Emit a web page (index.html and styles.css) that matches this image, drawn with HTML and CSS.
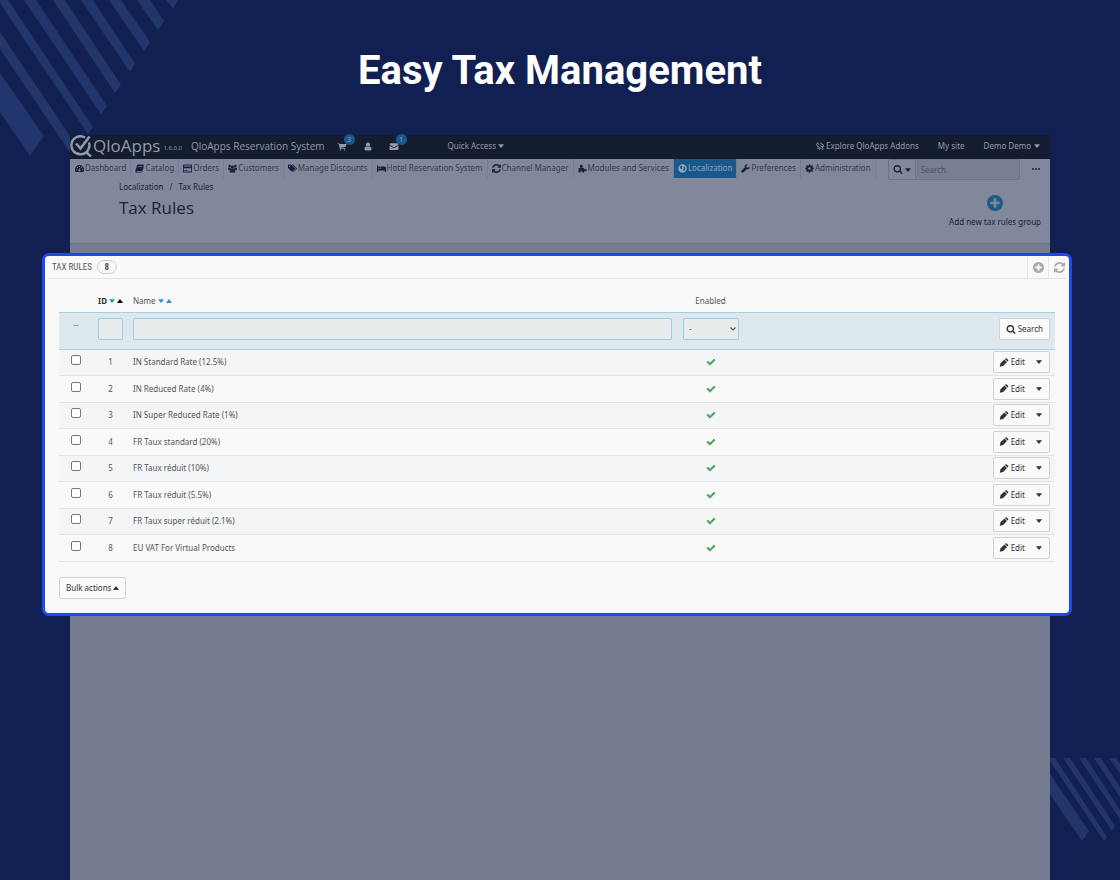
FILE: index.html
```html
<!DOCTYPE html>
<html lang="en">
<head>
    <meta charset="UTF-8">
    <meta name="viewport" content="width=device-width, initial-scale=1.0">
    <title>Easy Tax Management</title>
    <link rel="stylesheet" href="styles.css">
</head>
<body>
    <!-- Icon sprite -->
    <svg class="sprite" aria-hidden="true">
        <symbol id="i-check" viewBox="0 0 1792 1792"><path d="M1671 566q0 40-28 68l-724 724-136 136q-28 28-68 28t-68-28l-136-136-362-362q-28-28-28-68t28-68l136-136q28-28 68-28t68 28l294 295 656-657q28-28 68-28t68 28l136 136q28 28 28 68z"/></symbol>
        <symbol id="i-plus" viewBox="128 128 1536 1536"><path d="M1344 960v-128q0-26-19-45t-45-19h-256v-256q0-26-19-45t-45-19h-128q-26 0-45 19t-19 45v256h-256q-26 0-45 19t-19 45v128q0 26 19 45t45 19h256v256q0 26 19 45t45 19h128q26 0 45-19t19-45v-256h256q26 0 45-19t19-45zm320-64q0 209-103 385.5t-279.5 279.5-385.5 103-385.5-103-279.5-279.5-103-385.5 103-385.5 279.5-279.5 385.5-103 385.5 103 279.5 279.5 103 385.5z"/></symbol>
        <symbol id="i-search" viewBox="64 128 1664 1664"><path d="M1216 832q0-185-131.5-316.5t-316.5-131.5-316.5 131.5-131.5 316.5 131.5 316.5 316.5 131.5 316.5-131.5 131.5-316.5zm512 832q0 52-38 90t-90 38q-54 0-90-38l-343-342q-179 124-399 124-143 0-273.5-55.5t-225-150-150-225-55.5-273.5 55.5-273.5 150-225 225-150 273.5-55.5 273.5 55.5 225 150 150 225 55.5 273.5q0 220-124 399l343 343q37 37 37 90z"/></symbol>
        <symbol id="i-refresh" viewBox="128 128 1536 1536"><path d="M1639 1056q0 5-1 7-64 268-268 434.5t-478 166.5q-146 0-282.5-55t-243.5-157l-129 129q-19 19-45 19t-45-19-19-45v-448q0-26 19-45t45-19h448q26 0 45 19t19 45-19 45l-137 137q71 66 161 102t187 36q134 0 250-65t186-179q11-17 53-117 8-23 30-23h192q13 0 22.5 9.5t9.500 22.500zm25-800v448q0 26-19 45t-45 19h-448q-26 0-45-19t-19-45 19-45l138-138q-148-137-349-137-134 0-250 65t-186 179q-11 17-53 117-8 23-30 23h-199q-13 0-22.500-9.500t-9.500-22.500v-7q65-268 270-434.500t480-166.500q146 0 284 55.500t245 156.500l130-129q19-19 45-19t45 19 19 45z"/></symbol>
        <symbol id="i-pencil" viewBox="0 0 16 16"><path d="M.5 15.500L1.700 9.500 8.700 2.700l4.600 4.600-6.800 7zM9.600 1.800l1-1q1.200-1 2.300 0L15.200 3.100q1 1.200 0 2.300l-1 1z"/></symbol>
        <symbol id="i-dashboard" viewBox="0 0 16 16"><path fill-rule="evenodd" d="M8 2a8 8 0 0 1 7 12H1A8 8 0 0 1 8 2zM8 3.500a1 1 0 1 0 0 2 1 1 0 0 0 0-2zM4.200 5a1 1 0 1 0 0 2 1 1 0 0 0 0-2zM11.800 5a1 1 0 1 0 0 2 1 1 0 0 0 0-2zM2.700 9a1 1 0 1 0 0 2 1 1 0 0 0 0-2zM13.300 9a1 1 0 1 0 0 2 1 1 0 0 0 0-2zM8.600 6.500L7.400 9.500a1.800 1.800 0 1 0 1.500.3l.7-3z"/></symbol>
        <symbol id="i-book" viewBox="0 0 16 16"><path fill-rule="evenodd" d="M5 1h9.500q1.300.3 1 1.500l-3 9.500q-.4 1-1.500 1H3q-.8.100-.6.800.3.700 1 .7h8.500l3-9.500.6.800-2.800 8.700q-.3 1-1.500 1H2.500Q.3 15 .5 12.500L3.500 2.500Q4 1 5 1zM6 4l-.4 1.200h6.500l.4-1.200z"/></symbol>
        <symbol id="i-card" viewBox="0 0 16 16"><path fill-rule="evenodd" d="M1.500 1h13Q16 1 16 2.500v11q0 1.500-1.500 1.500h-13Q0 15 0 13.500v-11Q0 1 1.500 1zM1.500 2.500v2h13v-2zM1.500 7.500v6h13v-6zM2.500 10.500h2v1.500h-2zM5.500 10.500h3v1.500h-3z"/></symbol>
        <symbol id="i-users" viewBox="0 0 16 16"><circle cx="3" cy="3.500" r="2.200"/><circle cx="13" cy="3.500" r="2.200"/><circle cx="8" cy="5.500" r="3"/><path d="M0 9.500Q0 6 1.500 6h3q0 2 1 3-1.500 0-2.500 1.500H1q-1 0-1-1zM16 9.500Q16 6 14.500 6h-3q0 2-1 3 1.500 0 2.500 1.500h2q1 0 1-1zM5.500 8.500h5q2.500 1 2.500 5 0 1.500-1.500 1.500h-7Q3 15 3 13.500q0-4 2.500-5z"/></symbol>
        <symbol id="i-tags" viewBox="0 0 16 16"><path fill-rule="evenodd" d="M0 2q0-1 1-1h4.500l1 .5 6 6q.7.700 0 1.500L8 13.500q-.8.700-1.500 0l-6-6L0 6.500zM3 2.700a1.200 1.200 0 1 0 0 2.400 1.200 1.200 0 0 0 0-2.400z"/><path d="M7 1h1.500l1 .5 6 6q.7.700 0 1.500L11 13.500q-.8.700-1.500 0l4-4q.8-1 .2-2z"/></symbol>
        <symbol id="i-bed" viewBox="0 0 16 16"><path d="M0 2h2v7h14v5h-2v-2.500H2V14H0z"/><circle cx="4.200" cy="6.500" r="2"/><path d="M6.500 4.500H13q3 0 3 3v1.500H6.500z"/></symbol>
        <symbol id="i-puzzle" viewBox="0 0 16 16"><path d="M1 7h3.500Q3 5 3.500 3.200 4.200 1.500 6 1.500t2.500 1.700Q9 5 7.500 7H11v3q1.500-1.200 2.800-1 1.700.3 1.700 2t-1.700 2q-1.300.2-2.800-1v3H7.500q.7-2.500-1.500-2.500T4.500 15H1z"/></symbol>
        <symbol id="i-globe" viewBox="0 0 16 16"><path fill-rule="evenodd" d="M8 .5a7.500 7.500 0 1 1 0 15 7.500 7.500 0 0 1 0-15zM5 3L3 5.500 4 8l2.500 1L8 7 6.500 5.500 8 3.500zM11 4L9.500 6l1 2L9 10l1 3 2.500-3 .5-3z"/></symbol>
        <symbol id="i-wrench" viewBox="0 0 16 16"><path d="M15.500 4.500q.5 3-2 4.500-1.700 1-3.500.3L4 15.200q-1 1-2.200 0l-1-1q-1-1.200 0-2.200L6.700 6Q6 4.200 7 2.500 8.500 0 12 .8L9.500 3.500l.5 2.500 2.500.5z"/></symbol>
        <symbol id="i-cog" viewBox="0 0 16 16"><path fill-rule="evenodd" d="M6.800.5h2.400l.4 2 1.200.5 1.700-1.200 1.700 1.700L13 5.200l.5 1.200 2 .4v2.400l-2 .4-.5 1.200 1.200 1.700-1.700 1.700-1.700-1.200-1.200.5-.4 2H6.800l-.4-2-1.200-.5-1.700 1.200-1.700-1.700L3 10.800l-.5-1.200-2-.4V6.800l2-.4L3 5.200 1.800 3.500l1.700-1.700L5.200 3l1.200-.5zM8 5.700a2.300 2.300 0 1 0 0 4.600 2.300 2.300 0 0 0 0-4.600z"/></symbol>
        <symbol id="i-cart" viewBox="0 0 16 16"><path d="M0 2h3l.5 1.500H16L14.500 9 5 10.200l.2 1H14v1.300H4L2.200 3.300H0z"/><circle cx="5.300" cy="14" r="1.300"/><circle cx="12.700" cy="14" r="1.300"/></symbol>
        <symbol id="i-user" viewBox="0 0 16 16"><circle cx="8" cy="4.800" r="3.700"/><path d="M4.700 8Q8 10.300 11.300 8 14.500 9 14.500 13q0 2-2 2h-9q-2 0-2-2 0-4 3.200-5z"/></symbol>
        <symbol id="i-mail" viewBox="0 0 16 16"><path d="M0 3.500Q0 2 1.500 2h13Q16 2 16 3.500q0 1-1 1.800L9.500 9Q8 10 6.500 9L1 5.300q-1-.8-1-1.800zM0 6l6 4.200q2 1.300 4 0L16 6v6.500q0 1.500-1.500 1.500h-13Q0 14 0 12.500z"/></symbol>
        <symbol id="i-addons" viewBox="0 0 16 16"><g fill="none" stroke="currentColor" stroke-width="1.600"><path d="M6 2L3 2 2 5l2 3 3 1 4 4 3-1M5 5l2-1M9 2l2 0 0 2 3 1 0 3-3 0M9 6l2 3 3 2M3 11l3 0 1 3"/></g></symbol>
        <symbol id="i-down" viewBox="0 0 8 5"><path d="M0 0h8L4.600 4.600q-.6.600-1.200 0z"/></symbol>
        <symbol id="i-up" viewBox="0 0 8 5"><path d="M0 5h8L4.600.4q-.6-.6-1.200 0z"/></symbol>
    </svg>

    <svg class="stripes stripes-top" viewBox="0 0 180 160" aria-hidden="true">
        <path d="M0 73L44 136 30 156 0 112zM0 32L78 148 73 157 0 49zM0 0H8L93 127 88 134 0 3zM24 0H36L107 106 101 114zM53 0H65L121 85 115 93zM81 0H93L135 64 130 72zM109 0H121L150 42 144 51zM137 0H150L164 21 158 30zM166 0H178L173 9z"/>
    </svg>
    <svg class="stripes stripes-bottom" viewBox="0 0 70 84" aria-hidden="true">
        <path d="M0 16L39 73 32 83 0 36zM0 0H5L57 79 54 83 0 3zM13 0H20L65 68 62 73zM29 0H36L70 52V61zM44 0H51L70 29V39zM59 0H66L70 6V16z"/>
    </svg>

    <h1 class="banner">Easy Tax Management</h1>

    <div class="app">
        <header class="topbar">
            <a href="#" class="logo">
                <svg viewBox="0 0 22 22" aria-hidden="true"><g fill="none" stroke="currentColor"><path stroke-width="2.400" d="M15 2.500A9 9 0 1 0 19 7.500M16 17l5 4.500"/><path stroke-width="2.600" d="M6 8.500L10.500 13.500 19.500 1.500"/></g></svg>
                <span>QloApps</span>
            </a>
            <span class="version">1.6.0.0</span>
            <a href="#" class="shop-name">QloApps Reservation System</a>
            <a href="#" class="notif" aria-label="Orders"><svg><use href="#i-cart"/></svg><span class="badge">3</span></a>
            <a href="#" class="notif" aria-label="Customers"><svg><use href="#i-user"/></svg></a>
            <a href="#" class="notif" aria-label="Messages"><svg><use href="#i-mail"/></svg><span class="badge">1</span></a>
            <a href="#" class="quick">Quick Access <svg class="caret"><use href="#i-down"/></svg></a>
            <div class="topbar-right">
                <a href="#" class="addons"><svg class="icon"><use href="#i-addons"/></svg>Explore QloApps Addons</a>
                <a href="#">My site</a>
                <a href="#">Demo Demo <svg class="caret"><use href="#i-down"/></svg></a>
            </div>
        </header>

        <div class="menubar">
            <nav class="menu">
                <a href="#"><svg class="icon"><use href="#i-dashboard"/></svg>Dashboard</a>
                <a href="#"><svg class="icon"><use href="#i-book"/></svg>Catalog</a>
                <a href="#"><svg class="icon"><use href="#i-card"/></svg>Orders</a>
                <a href="#"><svg class="icon"><use href="#i-users"/></svg>Customers</a>
                <a href="#"><svg class="icon"><use href="#i-tags"/></svg>Manage Discounts</a>
                <a href="#"><svg class="icon"><use href="#i-bed"/></svg>Hotel Reservation System</a>
                <a href="#"><svg class="icon"><use href="#i-refresh"/></svg>Channel Manager</a>
                <a href="#"><svg class="icon"><use href="#i-puzzle"/></svg>Modules and Services</a>
                <a href="#" class="active"><svg class="icon"><use href="#i-globe"/></svg>Localization</a>
                <a href="#"><svg class="icon"><use href="#i-wrench"/></svg>Preferences</a>
                <a href="#"><svg class="icon"><use href="#i-cog"/></svg>Administration</a>
            </nav>
            <form class="search-group">
                <button type="button" aria-label="Search in"><svg class="icon"><use href="#i-search"/></svg><svg class="caret"><use href="#i-down"/></svg></button>
                <input type="text" placeholder="Search" aria-label="Search">
            </form>
            <button type="button" class="more" aria-label="More"><svg viewBox="0 0 8 2"><circle cx="1" cy="1" r="1"/><circle cx="4" cy="1" r="1"/><circle cx="7" cy="1" r="1"/></svg></button>
        </div>

        <div class="page-head">
            <div>
                <div class="breadcrumb"><a href="#">Localization</a><span>/</span><a href="#">Tax Rules</a></div>
                <h2 class="page-title">Tax Rules</h2>
            </div>
            <a href="#" class="add-new"><svg><use href="#i-plus"/></svg>Add new tax rules group</a>
        </div>

        <section class="panel">
            <div class="panel-head">
                <h3>TAX RULES</h3>
                <span class="count">8</span>
                <div class="panel-tools">
                    <button type="button" aria-label="Add new"><svg><use href="#i-plus"/></svg></button>
                    <button type="button" aria-label="Refresh list"><svg><use href="#i-refresh"/></svg></button>
                </div>
            </div>
            <div class="panel-body">
                <table class="rules">
                    <colgroup><col class="col-check"><col class="col-id"><col><col class="col-enabled"><col class="col-actions"></colgroup>
                    <thead>
                        <tr class="titles">
                            <th></th>
                            <th class="sorted"><span class="sort">ID<svg><use href="#i-down"/></svg><svg class="on"><use href="#i-up"/></svg></span></th>
                            <th class="name"><span class="sort">Name<svg><use href="#i-down"/></svg><svg><use href="#i-up"/></svg></span></th>
                            <th>Enabled</th>
                            <th></th>
                        </tr>
                        <tr class="filters">
                            <td class="dashes">--</td>
                            <td><input type="text" aria-label="Filter by ID"></td>
                            <td><input type="text" aria-label="Filter by name"></td>
                            <td><select aria-label="Filter by status"><option>-</option><option>Yes</option><option>No</option></select></td>
                            <td class="actions"><button type="button" class="btn"><svg class="icon"><use href="#i-search"/></svg>Search</button></td>
                        </tr>
                    </thead>
                    <tbody id="rows"></tbody>
                </table>
                <button type="button" class="btn bulk">Bulk actions<svg class="caret"><use href="#i-up"/></svg></button>
            </div>
        </section>
    </div>

    <script>
        const rules = [
            'IN Standard Rate (12.5%)',
            'IN Reduced Rate (4%)',
            'IN Super Reduced Rate (1%)',
            'FR Taux standard (20%)',
            'FR Taux réduit (10%)',
            'FR Taux réduit (5.5%)',
            'FR Taux super réduit (2.1%)',
            'EU VAT For Virtual Products'
        ];

        document.getElementById('rows').innerHTML = rules.map((name, i) => `
            <tr>
                <td><input type="checkbox" aria-label="Select ${name}"></td>
                <td>${i + 1}</td>
                <td class="name">${name}</td>
                <td><svg class="check"><use href="#i-check"/></svg></td>
                <td class="actions"><div class="btn-group"><button type="button"><svg class="icon"><use href="#i-pencil"/></svg>Edit</button><button type="button" aria-label="More actions"><svg class="caret"><use href="#i-down"/></svg></button></div></td>
            </tr>`).join('');
    </script>
</body>
</html>
```
FILE: styles.css
```css
* {
    margin: 0;
    padding: 0;
    box-sizing: border-box;
}

body {
    position: relative;
    display: flex;
    flex-direction: column;
    min-height: 100vh;
    background: #112050;
    font-family: "Noto Sans", "Open Sans", sans-serif;
    font-size: 8px;
    line-height: 12px;
    color: #555;
}

a {
    color: inherit;
    text-decoration: none;
}

button,
input,
select {
    font: inherit;
    color: inherit;
}

button {
    background: none;
    border: none;
    cursor: pointer;
}

svg {
    display: block;
    flex: none;
    fill: currentColor;
}

.sprite {
    position: absolute;
    width: 0;
    height: 0;
}

.icon {
    width: 10px;
    height: 9px;
}

.caret {
    width: 6px;
    height: 4px;
}

/* Background */
.stripes {
    position: absolute;
    fill: #22366e;
}

.stripes-top {
    top: 0;
    left: 0;
    width: 180px;
}

.stripes-bottom {
    right: 0;
    bottom: 38px;
    width: 70px;
}

.banner {
    padding: 47px 20px 40px;
    font-family: Roboto, sans-serif;
    font-size: 40px;
    font-weight: 700;
    line-height: 48px;
    text-align: center;
    color: #fff;
}

/* Back office */
.app {
    position: relative;
    flex: 1;
    margin: 0 70px;
    background: #757c90;
}

.topbar {
    display: flex;
    align-items: center;
    height: 24px;
    padding: 0 10px 2px 0;
    background: #141c30;
    color: #949aaa;
}

.logo {
    display: flex;
    align-items: center;
    gap: 1px;
    font-family: "Open Sans", sans-serif;
    font-size: 17px;
    line-height: 22px;
}

.logo svg {
    width: 22px;
    height: 22px;
}

.version {
    margin: 4px 9px 0 3px;
    font-size: 6px;
}

.shop-name {
    margin-right: 12px;
    font-family: "Open Sans", sans-serif;
    font-size: 10px;
}

.notif {
    position: relative;
    margin-right: 16px;
}

.notif svg {
    width: 10px;
    height: 9px;
}

.badge {
    position: absolute;
    top: -8px;
    left: 7px;
    width: 11px;
    border-radius: 6px;
    background: #1a588c;
    font-size: 7px;
    line-height: 11px;
    text-align: center;
}

.quick {
    display: flex;
    align-items: center;
    gap: 2px;
    margin-left: 33px;
}

.topbar-right {
    display: flex;
    gap: 19px;
    margin-left: auto;
}

.topbar-right a {
    display: flex;
    align-items: center;
    gap: 3px;
}

.topbar-right .addons {
    gap: 1px;
}

.menubar {
    display: flex;
    align-items: flex-start;
    background: #82889b;
    color: #2f3a59;
}

.menu {
    display: flex;
    padding-left: 1px;
}

.menu a {
    display: flex;
    align-items: center;
    gap: 1px;
    height: 19px;
    padding: 0 4px 1px;
    border-right: 1px solid #757d92;
    white-space: nowrap;
}

.menu .icon {
    width: 9px;
    color: #17213e;
}

.menu .active,
.menu .active .icon {
    background: #1a588c;
    color: #8fa4bf;
}

.search-group {
    display: flex;
    flex: 1;
    min-width: 0;
    height: 21px;
    margin-left: 12px;
    border: 1px solid #6a7690;
    border-radius: 2px;
}

.search-group button {
    display: flex;
    align-items: center;
    gap: 2px;
    padding: 0 4px;
    color: #17213e;
}

.search-group input {
    flex: 1;
    min-width: 0;
    padding: 0 5px;
    border: none;
    border-left: 1px solid #6a7690;
    background: #787f93;
}

.search-group input::placeholder {
    color: #464f6a;
}

.more {
    padding: 9px 10px 8px 12px;
    color: #17213e;
}

.more svg {
    width: 8px;
    height: 2px;
}

.page-head {
    display: flex;
    justify-content: space-between;
    height: 64px;
    margin-bottom: 9px;
    padding: 1px 9px 0 49px;
    border-bottom: 1px solid #6a7690;
    background: #82889b;
    color: #17213e;
}

.breadcrumb span {
    margin: 0 6px;
}

.page-title {
    margin-top: 4px;
    font-family: "Open Sans", sans-serif;
    font-size: 17px;
    font-weight: 400;
    line-height: 22px;
}

.add-new {
    display: flex;
    flex-direction: column;
    align-items: center;
    gap: 5px;
    padding-top: 14px;
}

.add-new svg {
    width: 16px;
    height: 16px;
    color: #1b5d85;
}

/* Tax rules list */
.panel {
    margin: 0 -22px 0 -28px;
    border: 3px solid #2048f0;
    border-radius: 7px;
    background: #f9f9f9;
}

.panel-head {
    display: flex;
    align-items: center;
    gap: 5px;
    height: 23px;
    margin: 0 3px;
    padding-left: 4px;
    border-bottom: 1px solid #e2e2e2;
}

.panel-head h3 {
    font-family: "Roboto Condensed", Roboto, sans-serif;
    font-size: 9px;
    font-weight: 400;
}

.count {
    width: 20px;
    border: 1px solid #ccc;
    border-radius: 7px;
    font-family: "Roboto Condensed", Roboto, sans-serif;
    font-size: 9px;
    font-weight: 700;
    text-align: center;
}

.panel-tools {
    display: flex;
    align-self: stretch;
    margin-left: auto;
    color: #aaa;
}

.panel-tools button {
    width: 21px;
    padding: 1px 0 0 5px;
    border-left: 1px solid #e6e6e6;
}

.panel-tools button:last-child {
    width: 18px;
}

.panel-tools svg {
    width: 11px;
    height: 11px;
}

.panel-body {
    padding: 12px 14px 14px;
}

.rules {
    width: 100%;
    table-layout: fixed;
    border-collapse: collapse;
    text-align: center;
}

.col-check {
    width: 34px;
}

.col-id {
    width: 35px;
}

.col-enabled {
    width: 67px;
}

.col-actions {
    width: 311px;
}

.rules th {
    height: 21px;
    padding-bottom: 1px;
    font-weight: 400;
}

.rules th.sorted {
    font-weight: 700;
    color: #333;
}

.rules .name {
    padding-left: 5px;
    text-align: left;
}

.sort {
    display: inline-flex;
    align-items: center;
    gap: 2px;
}

.sort svg {
    width: 6px;
    height: 4px;
    color: #2e8fd0;
}

.sort .on {
    color: #000;
}

.filters td {
    height: 37px;
    padding: 0 5px 3px;
    border-top: 1px solid #a9cfe2;
    border-bottom: 1px solid #a9cfe2;
    background: #dde8ee;
}

.filters .dashes {
    padding-bottom: 12px;
    color: #777;
}

.filters input,
.filters select {
    display: block;
    width: 100%;
    height: 22px;
    padding: 0 5px;
    border: 1px solid #a4cadf;
    border-radius: 2px;
    background: #e8ecec;
}

.filters select {
    appearance: none;
    background: #e8ecec url("data:image/svg+xml,%3Csvg xmlns='http://www.w3.org/2000/svg' viewBox='0 0 6 4'%3E%3Cpath d='M.5 .5L3 3L5.500 .5' fill='none' stroke='%23555' stroke-width='1.200'/%3E%3C/svg%3E") no-repeat right 2px center / 6px 4px;
}

.filters td:nth-child(4) {
    padding: 0 5px 3px 6px;
}

.rules tbody td {
    height: 26px;
    border-bottom: 1px solid #e2e4e6;
}

.rules tbody tr:nth-child(even) td {
    height: 27px;
}

.rules tbody tr:nth-child(odd) {
    background: #f3f5f7;
}

.rules input[type="checkbox"] {
    display: block;
    width: 10px;
    height: 10px;
    margin: 0 auto 4px 12px;
    appearance: none;
    border: 1px solid #777;
    border-radius: 2px;
    background: #fff;
}

.rules input[type="checkbox"]:checked {
    background: #2e8fd0;
}

.check {
    width: 10px;
    height: 10px;
    margin: 0 auto;
    color: #4fa35c;
}

.rules .actions {
    padding-right: 5px;
}

.btn,
.btn-group {
    display: flex;
    align-items: center;
    height: 22px;
    border: 1px solid #d2d2d2;
    border-radius: 2px;
    background: #fafafa;
    color: #333;
}

.btn {
    gap: 2px;
    padding: 0 6px;
}

.actions .btn,
.btn-group {
    width: fit-content;
    margin-left: auto;
}

.btn-group button {
    display: flex;
    align-items: center;
    gap: 2px;
    height: 20px;
    padding: 0 6px 0 5px;
}

.btn-group button + button {
    padding: 0 7px 0 5px;
}

.bulk {
    margin-top: 15px;
}
```
